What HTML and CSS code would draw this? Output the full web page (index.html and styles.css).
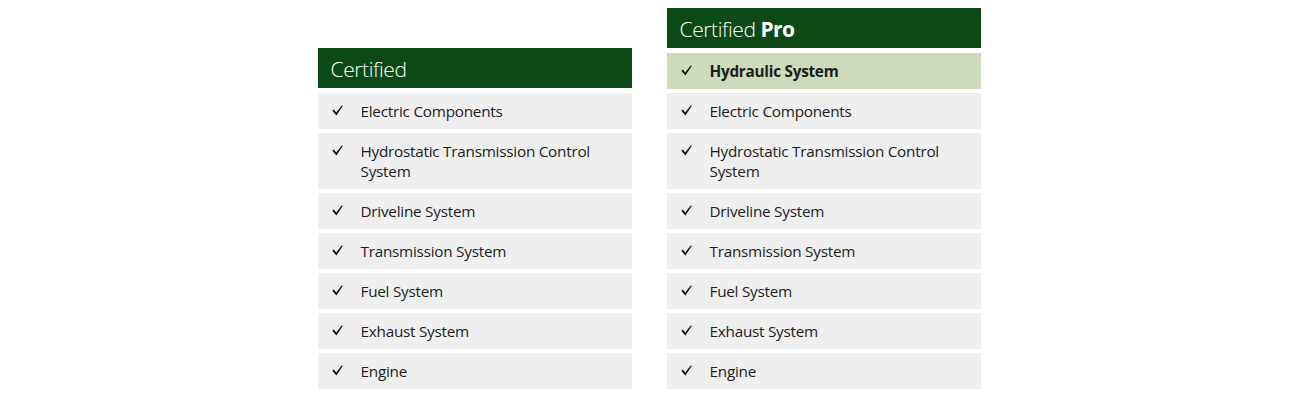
FILE: index.html
```html
<!DOCTYPE html>
<html lang="en">
<head>
<meta charset="utf-8">
<title>Certified plans</title>
<link rel="stylesheet" href="styles.css">
</head>
<body>
<main class="plans">
  <section class="plan">
    <h2 class="plan-title">Certified</h2>
    <ul class="plan-list">
      <li class="item"><svg class="check" viewBox="0 0 11 11" aria-hidden="true"><path d="M0.3 5.8 L1.9 4.6 L4.2 7.4 L9.9 0.3 L10.7 1 L4.4 10.6 Z"/></svg><span class="label">Electric Components</span></li>
      <li class="item"><svg class="check" viewBox="0 0 11 11" aria-hidden="true"><path d="M0.3 5.8 L1.9 4.6 L4.2 7.4 L9.9 0.3 L10.7 1 L4.4 10.6 Z"/></svg><span class="label">Hydrostatic Transmission Control System</span></li>
      <li class="item"><svg class="check" viewBox="0 0 11 11" aria-hidden="true"><path d="M0.3 5.8 L1.9 4.6 L4.2 7.4 L9.9 0.3 L10.7 1 L4.4 10.6 Z"/></svg><span class="label">Driveline System</span></li>
      <li class="item"><svg class="check" viewBox="0 0 11 11" aria-hidden="true"><path d="M0.3 5.8 L1.9 4.6 L4.2 7.4 L9.9 0.3 L10.7 1 L4.4 10.6 Z"/></svg><span class="label">Transmission System</span></li>
      <li class="item"><svg class="check" viewBox="0 0 11 11" aria-hidden="true"><path d="M0.3 5.8 L1.9 4.6 L4.2 7.4 L9.9 0.3 L10.7 1 L4.4 10.6 Z"/></svg><span class="label">Fuel System</span></li>
      <li class="item"><svg class="check" viewBox="0 0 11 11" aria-hidden="true"><path d="M0.3 5.8 L1.9 4.6 L4.2 7.4 L9.9 0.3 L10.7 1 L4.4 10.6 Z"/></svg><span class="label">Exhaust System</span></li>
      <li class="item"><svg class="check" viewBox="0 0 11 11" aria-hidden="true"><path d="M0.3 5.8 L1.9 4.6 L4.2 7.4 L9.9 0.3 L10.7 1 L4.4 10.6 Z"/></svg><span class="label">Engine</span></li>
    </ul>
  </section>
  <section class="plan">
    <h2 class="plan-title">Certified <strong>Pro</strong></h2>
    <ul class="plan-list">
      <li class="item item-highlight"><svg class="check" viewBox="0 0 11 11" aria-hidden="true"><path d="M0.3 5.8 L1.9 4.6 L4.2 7.4 L9.9 0.3 L10.7 1 L4.4 10.6 Z"/></svg><span class="label">Hydraulic System</span></li>
      <li class="item"><svg class="check" viewBox="0 0 11 11" aria-hidden="true"><path d="M0.3 5.8 L1.9 4.6 L4.2 7.4 L9.9 0.3 L10.7 1 L4.4 10.6 Z"/></svg><span class="label">Electric Components</span></li>
      <li class="item"><svg class="check" viewBox="0 0 11 11" aria-hidden="true"><path d="M0.3 5.8 L1.9 4.6 L4.2 7.4 L9.9 0.3 L10.7 1 L4.4 10.6 Z"/></svg><span class="label">Hydrostatic Transmission Control System</span></li>
      <li class="item"><svg class="check" viewBox="0 0 11 11" aria-hidden="true"><path d="M0.3 5.8 L1.9 4.6 L4.2 7.4 L9.9 0.3 L10.7 1 L4.4 10.6 Z"/></svg><span class="label">Driveline System</span></li>
      <li class="item"><svg class="check" viewBox="0 0 11 11" aria-hidden="true"><path d="M0.3 5.8 L1.9 4.6 L4.2 7.4 L9.9 0.3 L10.7 1 L4.4 10.6 Z"/></svg><span class="label">Transmission System</span></li>
      <li class="item"><svg class="check" viewBox="0 0 11 11" aria-hidden="true"><path d="M0.3 5.8 L1.9 4.6 L4.2 7.4 L9.9 0.3 L10.7 1 L4.4 10.6 Z"/></svg><span class="label">Fuel System</span></li>
      <li class="item"><svg class="check" viewBox="0 0 11 11" aria-hidden="true"><path d="M0.3 5.8 L1.9 4.6 L4.2 7.4 L9.9 0.3 L10.7 1 L4.4 10.6 Z"/></svg><span class="label">Exhaust System</span></li>
      <li class="item"><svg class="check" viewBox="0 0 11 11" aria-hidden="true"><path d="M0.3 5.8 L1.9 4.6 L4.2 7.4 L9.9 0.3 L10.7 1 L4.4 10.6 Z"/></svg><span class="label">Engine</span></li>
    </ul>
  </section>
</main>
</body>
</html>
```

FILE: styles.css
```css
* { box-sizing: border-box; }

body {
  margin: 0;
  background: #ffffff;
  font-family: "Open Sans", "Noto Sans", sans-serif;
  color: #1c1c1c;
}

.plans {
  display: flex;
  justify-content: center;
  align-items: flex-end;
  gap: 35px;
  padding-top: 8px;
  padding-right: 2px;
}

.plan {
  width: 314px;
  display: flex;
  flex-direction: column;
  gap: 5px;
}

.plan-title {
  margin: 0;
  height: 40px;
  padding-left: 13px;
  padding-top: 2px;
  display: flex;
  align-items: center;
  background: #0b4a14;
  color: #ffffff;
  font-size: 21px;
  font-weight: 300;
  letter-spacing: -0.4px;
}

.plan-title strong {
  font-weight: 700;
  margin-left: 5px;
  letter-spacing: -0.6px;
}

.plan-list {
  list-style: none;
  margin: 0;
  padding: 0;
  display: flex;
  flex-direction: column;
  gap: 4px;
}

.item {
  display: flex;
  align-items: flex-start;
  background: #efefef;
  padding: 8px 40px 8px 14px;
  font-size: 15.3px;
  line-height: 20px;
}

.item-highlight {
  background: #cddbbb;
  font-weight: 700;
}

.check {
  width: 11px;
  height: 11px;
  flex: none;
  margin: 4px 18px 0 0;
  fill: #111111;
}

.label {
  letter-spacing: -0.25px;
}
```
